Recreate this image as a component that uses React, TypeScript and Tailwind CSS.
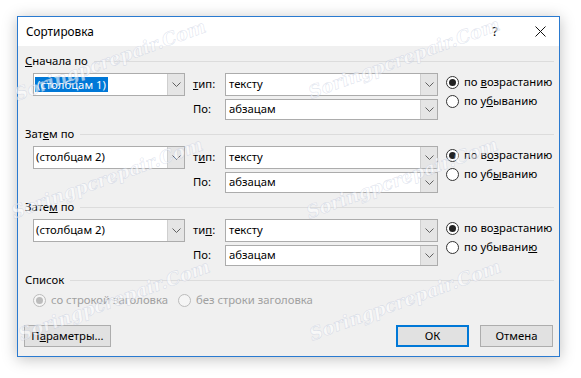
import type { ReactNode } from 'react';
import clsx from 'clsx';

function Chevron() {
  return (
    <svg width="9" height="5" viewBox="0 0 9 5">
      <path d="M0.5 0.5 L4.5 4.5 L8.5 0.5" fill="none" stroke="#606060" strokeWidth="1" />
    </svg>
  );
}

interface ComboProps {
  value: string;
  selected?: boolean;
  textClass?: string;
}

function Combo({ value, selected, textClass }: ComboProps) {
  return (
    <div className="flex items-stretch border border-[#acacac] bg-white h-full">
      <div className={clsx('flex-1 flex items-center whitespace-nowrap', textClass)}>
        {selected ? (
          <span className="bg-[#0078d7] text-white px-[2px] leading-[15px]">{value}</span>
        ) : (
          value
        )}
      </div>
      <div className="w-[17px] bg-[#e5e5e5] border-l border-[#cfcfcf] flex items-center justify-center">
        <Chevron />
      </div>
    </div>
  );
}

function SectionHeader({ children }: { children: ReactNode }) {
  return (
    <div className="flex items-center h-[16px]">
      <span className="whitespace-nowrap">{children}</span>
      <div className="flex-1 h-px bg-[#dcdcdc] ml-[6px]" />
    </div>
  );
}

interface RadioProps {
  checked?: boolean;
  disabled?: boolean;
  children: ReactNode;
  className?: string;
}

function Radio({ checked, disabled, children, className }: RadioProps) {
  return (
    <div className={clsx('flex items-center gap-[5px] h-[16px] whitespace-nowrap', disabled && 'text-[#a0a0a0]', className)}>
      <span
        className={clsx(
          'w-[13px] h-[13px] rounded-full border flex items-center justify-center shrink-0',
          disabled ? 'border-[#bcbcbc] bg-[#f5f5f5]' : 'border-[#333333] bg-white'
        )}
      >
        {checked && <span className={clsx('w-[7px] h-[7px] rounded-full', disabled ? 'bg-[#bcbcbc]' : 'bg-[#222222]')} />}
      </span>
      <span>{children}</span>
    </div>
  );
}

interface SortSectionProps {
  title: ReactNode;
  column: string;
  selected?: boolean;
  typeLabel: ReactNode;
  asc: ReactNode;
  desc: ReactNode;
}

function SortSection({ title, column, selected, typeLabel, asc, desc }: SortSectionProps) {
  return (
    <div className="h-[73px]">
      <SectionHeader>{title}</SectionHeader>
      <div className="grid grid-cols-[152px_40px_213px_1fr] grid-rows-[23px_21px] gap-y-[3px] ml-[8px] mt-[4px]">
        <div className="col-start-1 row-start-1">
          <Combo value={column} selected={selected} textClass={selected ? 'pl-[1px]' : 'pl-[2px]'} />
        </div>
        <div className="col-start-2 row-start-1 flex items-center pl-[8px]">{typeLabel}</div>
        <div className="col-start-3 row-start-1">
          <Combo value="тексту" textClass="pl-[3px]" />
        </div>
        <div className="col-start-2 row-start-2 flex items-center pl-[8px]">По:</div>
        <div className="col-start-3 row-start-2">
          <Combo value="абзацам" textClass="pl-[3px]" />
        </div>
        <div className="col-start-4 row-start-1 row-span-2 pl-[8px] pt-[1px] flex flex-col gap-[3px]">
          <Radio checked>{asc}</Radio>
          <Radio>{desc}</Radio>
        </div>
      </div>
    </div>
  );
}

// faint site watermark stamped over the screenshot
function Watermark({ className }: { className: string }) {
  return (
    <span
      className={clsx(
        "absolute pointer-events-none select-none whitespace-nowrap -translate-x-1/2 -translate-y-1/2 rotate-[-20deg] font-['DejaVu_Serif',serif] italic font-bold text-[18px] text-white/60 [-webkit-text-stroke:0.6px_rgba(150,165,200,0.3)]",
        className
      )}
    >
      Soringpcrepair.Com
    </span>
  );
}

export default function App() {
  return (
    <div className="relative w-[581px] h-[378px] bg-white pt-[16px] pl-[17px] overflow-hidden font-['Noto_Sans',sans-serif] text-[11.3px] text-black">
      <div className="w-[543px] h-[341px] border border-[#2a7ad0] flex flex-col shadow-[0_2px_14px_rgba(0,0,0,0.25)]">
        {/* Title bar */}
        <div className="h-[29px] bg-white flex items-center pl-[8px] shrink-0">
          <span className="text-[11.8px]">Сортировка</span>
          <span className="ml-auto text-[13px]">?</span>
          <svg className="ml-[37px] mr-[13px]" width="11" height="11" viewBox="0 0 11 11">
            <path d="M0.5 0.5 L10.5 10.5 M10.5 0.5 L0.5 10.5" stroke="#111" strokeWidth="1" />
          </svg>
        </div>

        {/* Body */}
        <div className="flex-1 bg-[#f0f0f0] pl-[7px] pr-[5px] pt-[7px]">
          <SortSection
            title={<><u>С</u>начала по</>}
            column="(столбцам 1)"
            selected
            typeLabel={<><u>т</u>ип:</>}
            asc={<>по <u>в</u>озрастанию</>}
            desc={<>по у<u>б</u>ыванию</>}
          />
          <SortSection
            title={<>Зат<u>е</u>м по</>}
            column="(столбцам 2)"
            typeLabel={<>т<u>и</u>п:</>}
            asc={<>по в<u>о</u>зрастанию</>}
            desc={<>по уб<u>ы</u>ванию</>}
          />
          <SortSection
            title={<>Зате<u>м</u> по</>}
            column="(столбцам 2)"
            typeLabel={<>ти<u>п</u>:</>}
            asc={<>по во<u>з</u>растанию</>}
            desc={<>по убывани<u>ю</u></>}
          />

          {/* Список */}
          <SectionHeader>Список</SectionHeader>
          <div className="flex ml-[8px] mt-[4px]">
            <Radio checked disabled className="w-[145px]">со строкой заголовка</Radio>
            <Radio disabled>без строки заголовка</Radio>
          </div>

          {/* Buttons */}
          <div className="flex items-center mt-[17px] -ml-px mr-[1px]">
            <button className="h-[22px] w-[87px] border border-[#adadad] bg-[#e1e1e1]">
              П<u>а</u>раметры...
            </button>
            <button className="ml-auto h-[22px] w-[73px] border-2 border-[#0078d7] bg-[#e1e1e1]">ОК</button>
            <button className="ml-[11px] h-[22px] w-[73px] border border-[#adadad] bg-[#e1e1e1]">Отмена</button>
          </div>
        </div>
      </div>

      <Watermark className="left-[110px] top-[60px]" />
      <Watermark className="left-[404px] top-[58px]" />
      <Watermark className="left-[107px] top-[178px]" />
      <Watermark className="left-[402px] top-[178px]" />
      <Watermark className="left-[114px] top-[300px]" />
      <Watermark className="left-[405px] top-[300px]" />
    </div>
  );
}
